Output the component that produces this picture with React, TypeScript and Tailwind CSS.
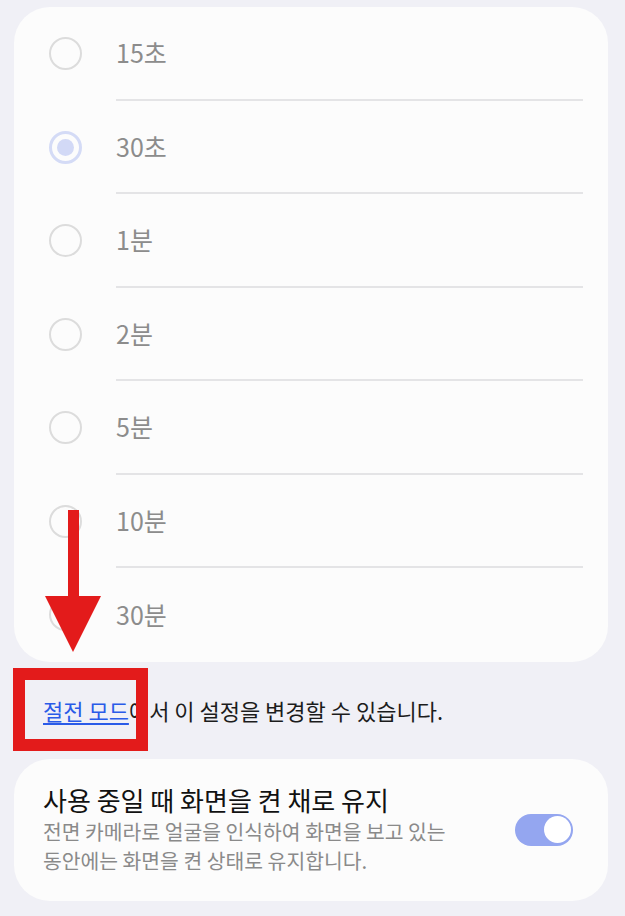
const options = ['15초', '30초', '1분', '2분', '5분', '10분', '30분']
const selected = '30초'

function Radio({ checked }: { checked: boolean }) {
  return checked ? (
    <span className="flex h-[33px] w-[33px] items-center justify-center rounded-full border-[3px] border-[#d4dbf6]">
      <span className="h-[17px] w-[17px] rounded-full bg-[#d2d9f6]" />
    </span>
  ) : (
    <span className="h-[33px] w-[33px] rounded-full border-[2.5px] border-[#dcdcdc]" />
  )
}

export default function App() {
  return (
    <div className="relative min-h-[916px] w-full overflow-hidden bg-[#f0f0f6] pl-[14px] pr-[17px] pt-[7px] font-['Noto_Sans_CJK_KR',sans-serif]">
      {/* timeout options */}
      <div className="rounded-[36px] bg-[#fcfcfc]">
        {options.map((opt, i) => (
          <div key={opt} className="flex h-[93.5px] items-center">
            <div className="ml-[35px] mr-[34px] flex shrink-0">
              <Radio checked={opt === selected} />
            </div>
            <div
              className={
                i < options.length - 1
                  ? 'mr-[25px] flex h-full flex-1 items-center border-b-2 border-[#e4e4e6]'
                  : 'mr-[25px] flex h-full flex-1 items-center'
              }
            >
              <span className="text-[25px] leading-none text-[#8c8c8c]">{opt}</span>
            </div>
          </div>
        ))}
      </div>

      {/* footnote */}
      <p className="mb-[33px] mt-[33px] pl-[29px] text-[22px] leading-[31px] text-[#1c1c1c]">
        <span className="text-[#2a5be8] underline decoration-[1.5px] underline-offset-[3px]">절전 모드</span>
        에서 이 설정을 변경할 수 있습니다.
      </p>

      {/* keep screen on */}
      <div className="flex h-[142px] items-center rounded-[36px] bg-[#fcfcfc] pl-[29px] pr-[35px]">
        <div className="flex-1">
          <div className="text-[26px] leading-[31px] text-[#111111]">사용 중일 때 화면을 켠 채로 유지</div>
          <div className="mt-[2px] text-[20.4px] leading-[29px] text-[#8a8a8a]">
            전면 카메라로 얼굴을 인식하여 화면을 보고 있는
            <br />
            동안에는 화면을 켠 상태로 유지합니다.
          </div>
        </div>
        <div className="flex h-[32px] w-[58px] shrink-0 items-center justify-end rounded-full bg-[#94a6f0] pr-[2px]">
          <span className="h-[27px] w-[27px] rounded-full bg-white" />
        </div>
      </div>

      {/* annotation: arrow */}
      <svg className="absolute left-[45px] top-[510px]" width="56" height="142" viewBox="0 0 56 142">
        <rect x="23" y="0" width="11" height="88" fill="#e31b1b" />
        <polygon points="0,86 56,86 28,142" fill="#e31b1b" />
      </svg>

      {/* annotation: box */}
      <div className="absolute left-[13px] top-[668px] h-[83px] w-[135px] border-[12px] border-[#e31b1b]" />
    </div>
  )
}
